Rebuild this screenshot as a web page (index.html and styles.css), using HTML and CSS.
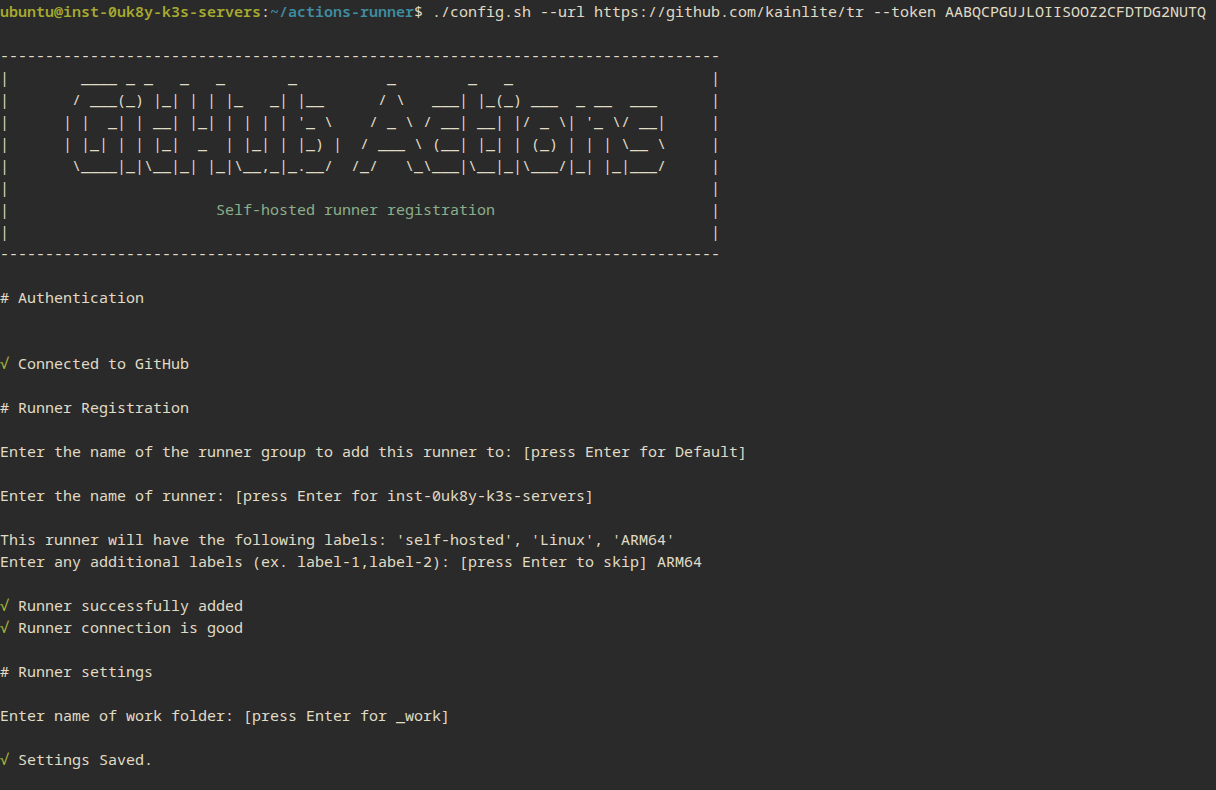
FILE: index.html
```html
<!DOCTYPE html>
<html lang="en">
<head>
<meta charset="utf-8">
<title>Terminal</title>
<link rel="stylesheet" href="styles.css">
</head>
<body>
<pre class="terminal"><span class="user">ubuntu@inst-0uk8y-k3s-servers</span>:<span class="path">~/actions-runner</span>$ ./config.sh --url https://github.com/kainlite/tr --token AABQCPGUJLOIISOOZ2CFDTDG2NUTQ

--------------------------------------------------------------------------------
|        ____ _ _   _   _       _          _        _   _                      |
|       / ___(_) |_| | | |_   _| |__      / \   ___| |_(_) ___  _ __  ___      |
|      | |  _| | __| |_| | | | | '_ \    / _ \ / __| __| |/ _ \| '_ \/ __|     |
|      | |_| | | |_|  _  | |_| | |_) |  / ___ \ (__| |_| | (_) | | | \__ \     |
|       \____|_|\__|_| |_|\__,_|_.__/  /_/   \_\___|\__|_|\___/|_| |_|___/     |
|                                                                              |
|                       <span class="heading">Self-hosted runner registration</span>                        |
|                                                                              |
--------------------------------------------------------------------------------

# Authentication


<span class="check">√</span> Connected to GitHub

# Runner Registration

Enter the name of the runner group to add this runner to: [press Enter for Default]

Enter the name of runner: [press Enter for inst-0uk8y-k3s-servers]

This runner will have the following labels: 'self-hosted', 'Linux', 'ARM64'
Enter any additional labels (ex. label-1,label-2): [press Enter to skip] ARM64

<span class="check">√</span> Runner successfully added
<span class="check">√</span> Runner connection is good

# Runner settings

Enter name of work folder: [press Enter for _work]

<span class="check">√</span> Settings Saved.
</pre>
</body>
</html>
```

FILE: styles.css
```css
html, body {
  margin: 0;
  height: 100%;
  overflow: hidden;
  background: #2a2a2a;
}

.terminal {
  margin: 0;
  font-family: "Noto Sans Mono", "DejaVu Sans Mono", monospace;
  font-size: 15px;
  line-height: 22px;
  color: #e0dcc6;
  white-space: pre;
}

.user {
  color: #a8aa30;
  font-weight: 600;
}

.path {
  color: #3f8fa3;
  font-weight: 600;
}

.heading {
  color: #8ab08a;
}

.check {
  color: #aab63c;
}
```
